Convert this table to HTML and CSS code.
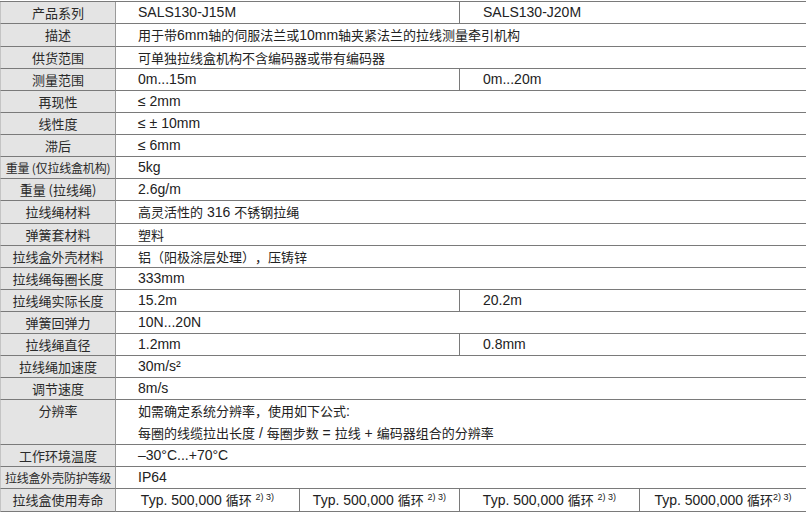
FILE: index.html
```html
<!DOCTYPE html>
<html lang="zh-CN">
<head>
<meta charset="utf-8">
<title>SALS130 规格</title>
<link rel="stylesheet" href="styles.css">
</head>
<body>
<div class="spec">
  <div class="lbl">产品系列</div><div class="v a">SALS130-J15M</div><div class="v b">SALS130-J20M</div>
  <div class="lbl">描述</div><div class="v full"><span class="zh">用于带</span>6mm<span class="zh">轴的伺服法兰或</span>10mm<span class="zh">轴夹紧法兰的拉线测量牵引机构</span></div>
  <div class="lbl">供货范围</div><div class="v full zh">可单独拉线盒机构不含编码器或带有编码器</div>
  <div class="lbl">测量范围</div><div class="v a">0m...15m</div><div class="v b">0m...20m</div>
  <div class="lbl">再现性</div><div class="v full">≤ 2mm</div>
  <div class="lbl">线性度</div><div class="v full">≤ ± 10mm</div>
  <div class="lbl">滞后</div><div class="v full">≤ 6mm</div>
  <div class="lbl small">重量 (仅拉线盒机构)</div><div class="v full">5kg</div>
  <div class="lbl">重量 (拉线绳)</div><div class="v full">2.6g/m</div>
  <div class="lbl">拉线绳材料</div><div class="v full"><span class="zh">高灵活性的</span> 316 <span class="zh">不锈钢拉绳</span></div>
  <div class="lbl">弹簧套材料</div><div class="v full zh">塑料</div>
  <div class="lbl">拉线盒外壳材料</div><div class="v full zh">铝（阳极涂层处理），压铸锌</div>
  <div class="lbl">拉线绳每圈长度</div><div class="v full">333mm</div>
  <div class="lbl">拉线绳实际长度</div><div class="v a">15.2m</div><div class="v b">20.2m</div>
  <div class="lbl">弹簧回弹力</div><div class="v full">10N...20N</div>
  <div class="lbl">拉线绳直径</div><div class="v a">1.2mm</div><div class="v b">0.8mm</div>
  <div class="lbl">拉线绳加速度</div><div class="v full">30m/s²</div>
  <div class="lbl">调节速度</div><div class="v full">8m/s</div>
  <div class="lbl">分辨率</div><div class="v full"><span class="zh">如需确定系统分辨率，使用如下公式</span>:<br><span class="zh">每圈的线缆拉出长度</span> / <span class="zh">每圈步数</span> = <span class="zh">拉线</span> + <span class="zh">编码器组合的分辨率</span></div>
  <div class="lbl">工作环境温度</div><div class="v full">–30°C...+70°C</div>
  <div class="lbl small">拉线盒外壳防护等级</div><div class="v full">IP64</div>
  <div class="lbl">拉线盒使用寿命</div><div class="v c c1">Typ. 500,000 <span class="zh">循环</span> <sup class="fn">2) 3)</sup></div><div class="v c c2">Typ. 500,000 <span class="zh">循环</span> <sup class="fn">2) 3)</sup></div><div class="v c c3">Typ. 500,000 <span class="zh">循环</span> <sup class="fn">2) 3)</sup></div><div class="v c c4">Typ. 5000,000 <span class="zh">循环</span><sup class="fn">2) 3)</sup></div>
</div>
</body>
</html>
```
FILE: styles.css
```css
html, body {
  margin: 0;
  padding: 0;
  background: #ffffff;
}
body {
  padding-top: 1px;
  font-family: "Liberation Sans", Arial, "Noto Sans CJK SC", sans-serif;
  color: #222222;
  text-spacing-trim: space-all;
}
.spec {
  display: grid;
  grid-template-columns: 116px 184px 160px 180px 166px;
  width: 806px;
  border-top: 1px solid #7a7a7a;
}
.spec > div {
  box-sizing: border-box;
  border-bottom: 1px solid #7a7a7a;
  line-height: 21px;
  white-space: nowrap;
}
.lbl {
  grid-column: 1 / 2;
  background: #e4e4e4;
  border-right: 1px solid #9a9a9a;
  border-left: 1px solid #c4c4c4;
  text-align: center;
  font-family: "Noto Sans CJK SC", sans-serif;
  font-size: 13px;
  color: #2a2a2a;
}
.lbl.small {
  font-size: 12px;
  letter-spacing: -0.2px;
}
.v {
  font-size: 14px;
  padding-left: 22px;
}
.zh {
  font-family: "Noto Sans CJK SC", sans-serif;
  font-size: 13px;
}
.full { grid-column: 2 / 6; }
.a { grid-column: 2 / 4; border-right: 1px solid #7a7a7a; }
.b { grid-column: 4 / 6; padding-left: 23px; }
.c {
  padding-left: 0;
  text-align: center;
}
.c1, .c2, .c3 { border-right: 1px solid #7a7a7a; }
.fn {
  font-size: 9px;
  line-height: 0;
  vertical-align: 5px;
}
```
